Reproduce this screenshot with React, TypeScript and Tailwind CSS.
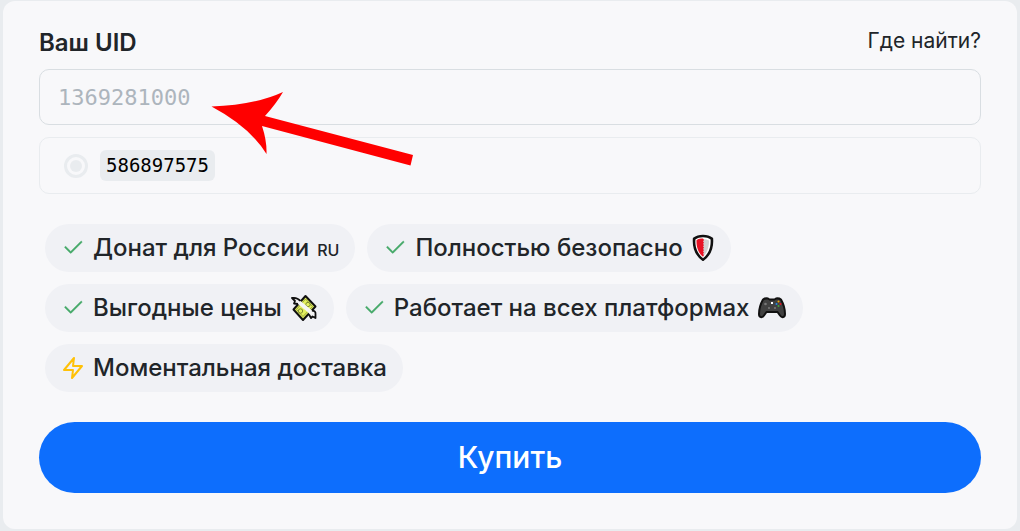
import type { ReactNode } from "react";
import { BsCheck2 } from "react-icons/bs";
import { FiZap } from "react-icons/fi";

const Badge = ({ icon, children }: { icon: ReactNode; children: ReactNode }) => {
  return (
    <li className="flex h-12 items-center gap-2 rounded-full bg-[#f0f1f5] px-4 text-2xl font-medium">
      {icon}
      <span className="flex items-center gap-2">{children}</span>
    </li>
  );
};

const Check = () => <BsCheck2 className="h-6 w-6 stroke-[0.4] text-[#43a867]" />;

const Shield = () => (
  <svg viewBox="0 0 24 28" className="h-7 w-6" aria-hidden="true">
    <path
      d="M12 1.5C9 1.5 5 2.6 2.6 4.4C2 12 3.6 20.5 12 26.3C20.4 20.5 22 12 21.4 4.4C19 2.6 15 1.5 12 1.5Z"
      fill="#111"
      stroke="#111"
      strokeWidth="1.500"
      strokeLinejoin="round"
    />
    <path d="M12 3.300C9 3.300 6.500 4 4.400 5.400C4 12 5.500 19 12 24.200C18.500 19 20 12 19.600 5.400C17.500 4 15 3.300 12 3.300Z" fill="#fff" />
    <path d="M12 5Q15.500 5 18 6.500C18 12 17 18 12 22.500Z" fill="#d2d2d2" />
    <path
      d="M12 4.500L10 4.600Q7 5 5.500 6.200C5.300 12 6.800 18.500 12 22.800L13 21L12 20L13 18.500L12 17.500L13 16L12 15L13 13.500L12 12.500L13 11L12 10L13 8.500L12 7.500L13 6Z"
      fill="#e81224"
    />
  </svg>
);

const Money = () => (
  <svg viewBox="0 0 28 28" className="h-7 w-7" aria-hidden="true">
    <path d="M15.500 2L25.500 12.500L13 26L3.500 15.500Z" fill="#e2ef5e" stroke="#111" strokeWidth="2" strokeLinejoin="round" />
    <path d="M15.500 5L22.500 12.500L13 22.500L6.500 15.500Z" fill="none" stroke="#9aa53a" strokeWidth="1" />
    <circle cx="18" cy="10.500" r="2.200" fill="none" stroke="#7f8a36" />
    <circle cx="10.500" cy="17" r="2.200" fill="none" stroke="#7f8a36" />
    <path
      d="M2 4Q7 3 10 6.500L22 16.500Q26 17 25.500 20V23L22.500 22L21 23.500L19.500 20Q18 18 17 17.500L8 10L4.500 9.500L5 7Z"
      fill="#f5f5f5"
    />
    <path
      d="M10.500 7Q7 3 2 4L5 7L4 9.500L8 10M22 16.500Q26 17 25.500 20V24L22.500 22.500L21 24L19 20.500"
      fill="none"
      stroke="#111"
      strokeWidth="1.800"
      strokeLinejoin="round"
    />
  </svg>
);

const Gamepad = () => (
  <svg viewBox="0 0 30 24" className="h-6 w-[30px]" aria-hidden="true">
    <path
      d="M6 3.500Q8 2 11 2.500L12.500 3.500H17.500L19 2.500Q22 2 24 3.500C26.500 8 28 14 28 18C28 21.500 25 22.200 23 19.500L20.500 16H9.500L7 19.500C5 22.200 2 21.500 2 18C2 14 3.500 8 6 3.500Z"
      fill="#414141"
      stroke="#111"
      strokeWidth="2"
      strokeLinejoin="round"
    />
    <rect x="14" y="6" width="2" height="2" fill="#fff" />
    <circle cx="8.500" cy="8" r="1.300" fill="#777" />
    <circle cx="12" cy="12" r="1.100" fill="#777" />
    <circle cx="18" cy="12" r="1.100" fill="#777" />
    <circle cx="21.500" cy="5.500" r="1" fill="#f5a900" />
    <circle cx="23.500" cy="8" r="1" fill="#e81224" />
    <circle cx="19.500" cy="8" r="1" fill="#1e88e5" />
    <circle cx="21.500" cy="10" r="1" fill="#3fa535" />
  </svg>
);

const Arrow = () => (
  <svg
    viewBox="0 0 202 76"
    className="pointer-events-none absolute left-[172px] top-[22px] h-[76px] w-[202px]"
    aria-hidden="true"
  >
    <path
      d="M0.500 15.500Q44 14 72 1Q65 13 54 25L202 64L199.500 74.500L51 35Q56 50 55.500 63Q39 36 0.500 15.500Z"
      fill="#f00"
    />
  </svg>
);

const App = () => {
  return (
    <div className="min-h-screen bg-[#e9ecef] px-[3px] pt-px pb-[3px] font-['Inter',sans-serif] text-[#212529]">
      <form className="rounded-xl bg-[#f8f8fa] px-9 pt-6 pb-9" onSubmit={(e) => e.preventDefault()}>
        <div className="flex h-9 items-start justify-between">
          <label htmlFor="uid" className="text-2xl leading-9 font-semibold">
            Ваш UID
          </label>
          <a href="#help" className="text-[21px] leading-8">
            Где найти?
          </a>
        </div>

        <div className="relative mt-2 flex flex-col gap-3">
          <input
            id="uid"
            type="text"
            placeholder="1369281000"
            className="h-14 w-full rounded-[10px] border border-[#d9dee2] px-[18px] font-['DejaVu_Sans_Mono',monospace] text-[22px] outline-none placeholder:text-[#adb5bd]"
          />
          <label className="flex h-[57px] items-center gap-3 rounded-[10px] border border-[#e9ecef] px-6">
            <input
              type="radio"
              name="saved"
              value="586897575"
              className="m-0 h-6 w-6 appearance-none rounded-full border-3 border-[#e9ecef] bg-[#e9ecef] bg-clip-content p-[3px]"
            />
            <code className="rounded-md bg-[#e9ecef] px-1.5 font-['DejaVu_Sans_Mono',monospace] text-[19px] leading-[31px] text-black">
              586897575
            </code>
          </label>
          <Arrow />
        </div>

        <ul className="mx-1.5 mt-[30px] flex flex-wrap gap-3">
          <Badge icon={<Check />}>
            Донат для России <span className="pt-1 text-base">RU</span>
          </Badge>
          <Badge icon={<Check />}>
            Полностью безопасно <Shield />
          </Badge>
          <Badge icon={<Check />}>
            Выгодные цены <Money />
          </Badge>
          <Badge icon={<Check />}>
            Работает на всех платформах <Gamepad />
          </Badge>
          <Badge icon={<FiZap className="h-6 w-6 text-[#ffc107]" />}>Моментальная доставка</Badge>
        </ul>

        <button
          type="submit"
          className="mt-[30px] h-[71px] w-full rounded-full bg-[#0d6efd] text-[30px] font-medium text-white"
        >
          Купить
        </button>
      </form>
    </div>
  );
};
export default App;
